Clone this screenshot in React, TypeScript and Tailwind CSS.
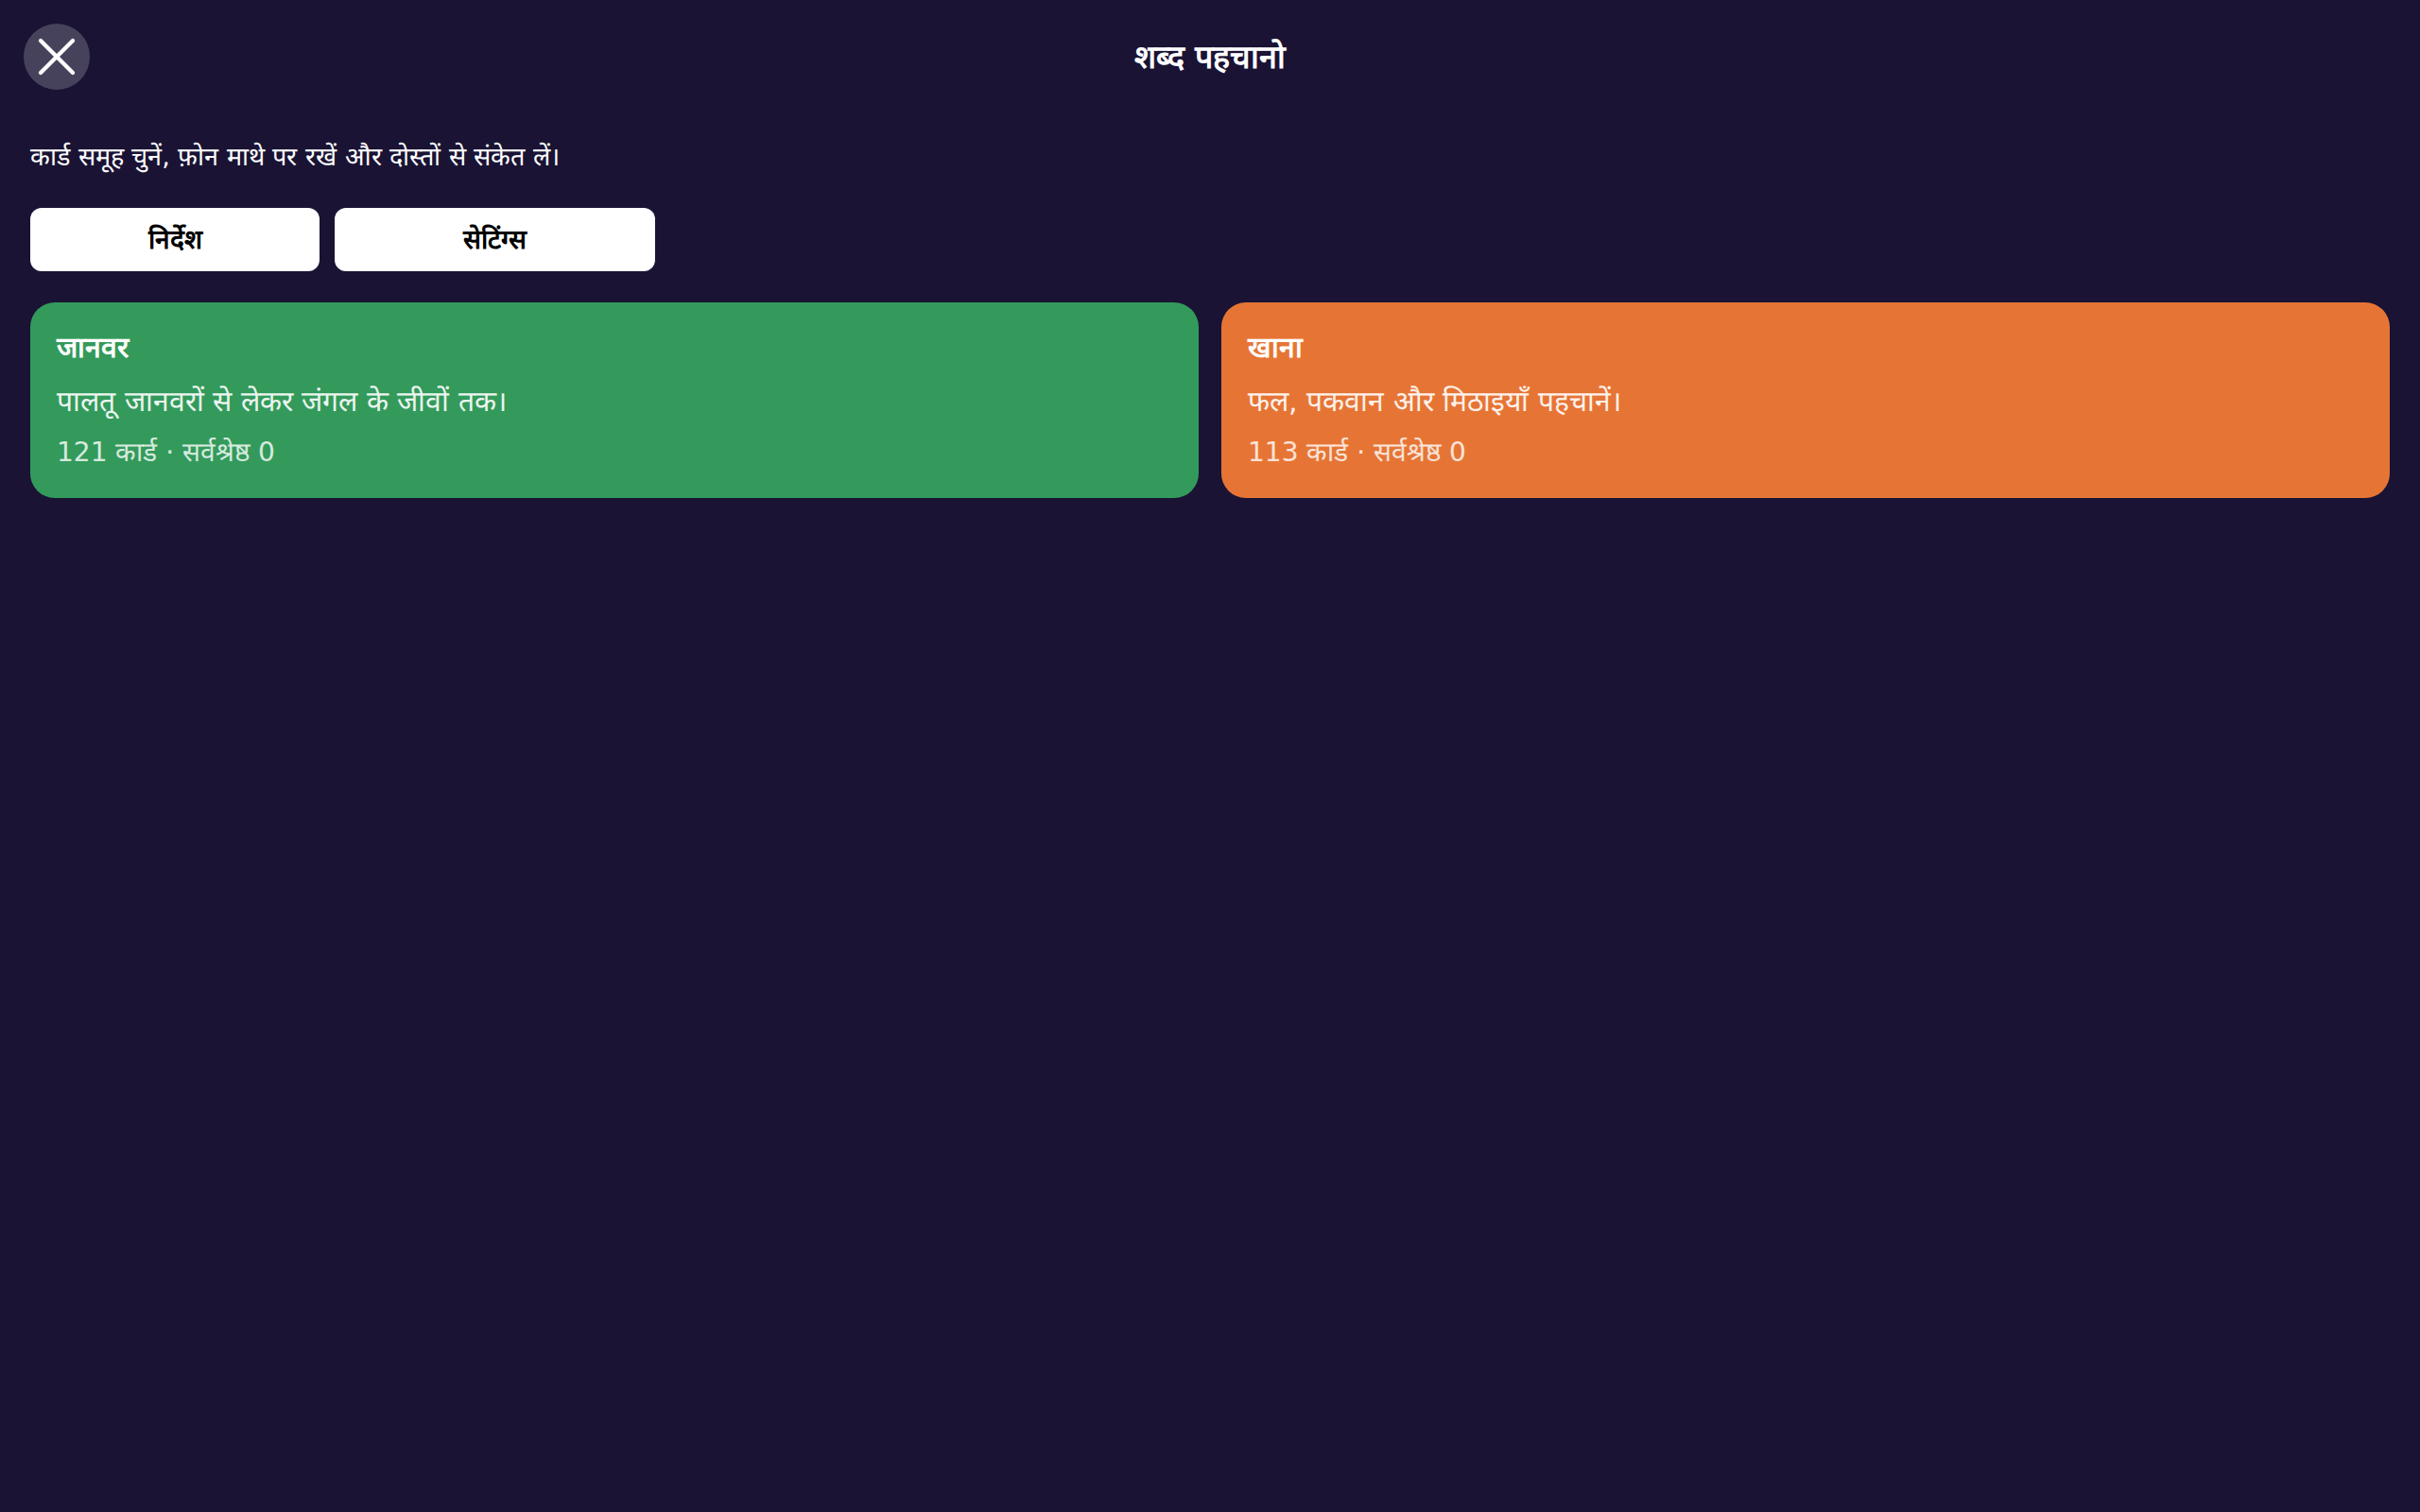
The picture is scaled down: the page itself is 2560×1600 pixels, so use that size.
import { X } from 'lucide-react'

type Deck = {
	id: string
	title: string
	blurb: string
	count: number
	best: number
	tone: string
}

const decks: Deck[] = [
	{
		id: 'animals',
		title: 'जानवर',
		blurb: 'पालतू जानवरों से लेकर जंगल के जीवों तक।',
		count: 121,
		best: 0,
		tone: 'bg-[#339a5b]'
	},
	{
		id: 'food',
		title: 'खाना',
		blurb: 'फल, पकवान और मिठाइयाँ पहचानें।',
		count: 113,
		best: 0,
		tone: 'bg-[#e67535]'
	}
]

function DeckCard({ deck }: { deck: Deck }) {
	return (
		<button
			type="button"
			className={`${deck.tone} flex flex-col items-start rounded-[26px] px-7 pt-[25px] pb-[26px] text-left text-white`}>
			<h2 className="text-[30px] leading-[46px] font-bold">{deck.title}</h2>
			<p className="mt-[11px] text-[30px] leading-[46px] text-white/90">{deck.blurb}</p>
			<p className="mt-[9px] text-[28px] leading-[44px] text-white/80">
				{deck.count} कार्ड · सर्वश्रेष्ठ {deck.best}
			</p>
		</button>
	)
}

export default function App() {
	return (
		<div className="min-h-screen bg-[#1a1334] font-['DejaVu_Sans',sans-serif] text-white">
			<header className="grid grid-cols-[70px_1fr_70px] items-center px-[25px] pt-[25px]">
				<button
					type="button"
					aria-label="बंद करें"
					className="flex h-[70px] w-[70px] items-center justify-center overflow-hidden rounded-full bg-white/20">
					<X className="shrink-0" size={68} strokeWidth={1.5} strokeLinecap="round" />
				</button>
				<h1 className="text-center text-[34px] font-bold">शब्द पहचानो</h1>
				<div />
			</header>

			<div className="px-8">
				<p className="mt-[51px] text-[27px] leading-[40px]">
					कार्ड समूह चुनें, फ़ोन माथे पर रखें और दोस्तों से संकेत लें।
				</p>

				<div className="mt-[34px] flex gap-4">
					<button type="button" className="h-[67px] w-[306px] rounded-xl bg-white text-[28px] font-bold text-black">
						निर्देश
					</button>
					<button type="button" className="h-[67px] w-[339px] rounded-xl bg-white text-[28px] font-bold text-black">
						सेटिंग्स
					</button>
				</div>

				<div className="mt-[33px] grid grid-cols-2 gap-6">
					{decks.map(deck => (
						<DeckCard key={deck.id} deck={deck} />
					))}
				</div>
			</div>
		</div>
	)
}
